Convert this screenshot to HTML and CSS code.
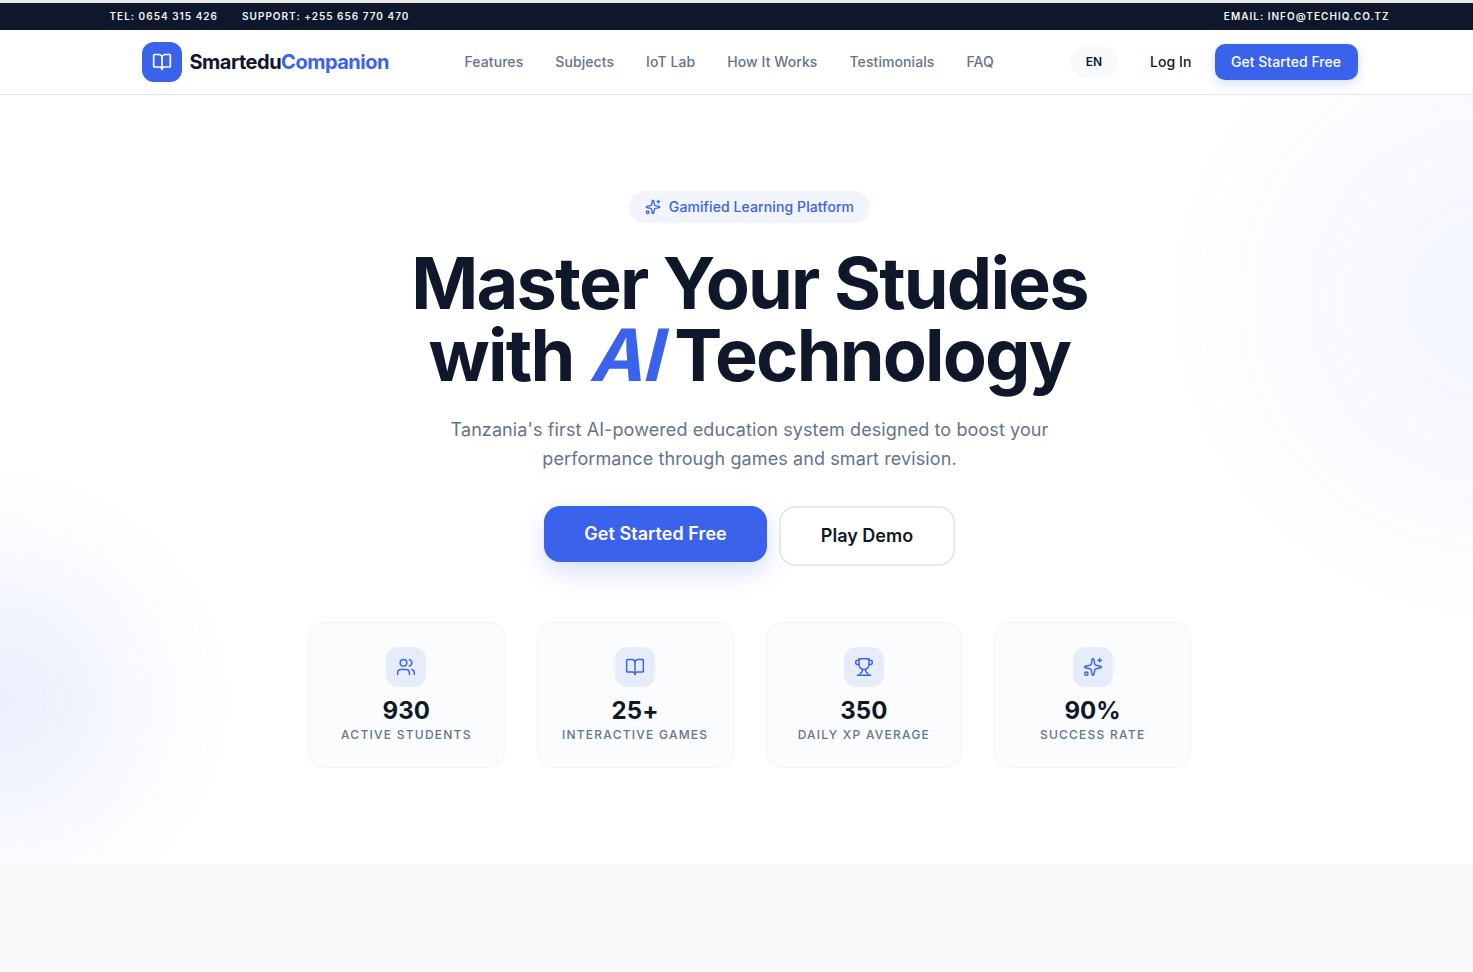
FILE: index.html
```html
<!DOCTYPE html>
<html lang="en">
<head>
    <meta charset="UTF-8">
    <meta name="viewport" content="width=device-width, initial-scale=1.0">
    <title>SmarteduCompanion</title>
    <link rel="stylesheet" href="styles.css">
</head>
<body>
    <!-- Icons -->
    <svg class="icon-defs" xmlns="http://www.w3.org/2000/svg">
        <symbol id="i-book" viewBox="0 0 24 24">
            <path d="M12 7v14"/>
            <path d="M3 18a1 1 0 0 1-1-1V4a1 1 0 0 1 1-1h5a4 4 0 0 1 4 4 4 4 0 0 1 4-4h5a1 1 0 0 1 1 1v13a1 1 0 0 1-1 1h-6a3 3 0 0 0-3 3 3 3 0 0 0-3-3z"/>
        </symbol>
        <symbol id="i-users" viewBox="0 0 24 24">
            <path d="M16 21v-2a4 4 0 0 0-4-4H6a4 4 0 0 0-4 4v2"/>
            <circle cx="9" cy="7" r="4"/>
            <path d="M22 21v-2a4 4 0 0 0-3-3.87"/>
            <path d="M16 3.13a4 4 0 0 1 0 7.75"/>
        </symbol>
        <symbol id="i-trophy" viewBox="0 0 24 24">
            <path d="M6 9H4.5a2.5 2.5 0 0 1 0-5H6"/>
            <path d="M18 9h1.5a2.5 2.5 0 0 0 0-5H18"/>
            <path d="M4 22h16"/>
            <path d="M10 14.66V17c0 .55-.47.98-.97 1.21C7.85 18.75 7 20.24 7 22"/>
            <path d="M14 14.66V17c0 .55.47.98.97 1.21C16.15 18.75 17 20.24 17 22"/>
            <path d="M18 2H6v7a6 6 0 0 0 12 0V2Z"/>
        </symbol>
        <symbol id="i-sparkles" viewBox="0 0 24 24">
            <path d="M11.017 2.814a1 1 0 0 1 1.966 0l1.051 5.558a2 2 0 0 0 1.594 1.594l5.558 1.051a1 1 0 0 1 0 1.966l-5.558 1.051a2 2 0 0 0-1.594 1.594l-1.051 5.558a1 1 0 0 1-1.966 0l-1.051-5.558a2 2 0 0 0-1.594-1.594l-5.558-1.051a1 1 0 0 1 0-1.966l5.558-1.051a2 2 0 0 0 1.594-1.594z"/>
            <path d="M20 2v4"/>
            <path d="M22 4h-4"/>
            <circle cx="4" cy="20" r="2"/>
        </symbol>
    </svg>

    <!-- Top bar -->
    <div class="topbar">
        <div class="topbar-inner">
            <div class="topbar-left">
                <span>Tel: 0654 315 426</span>
                <span>Support: +255 656 770 470</span>
            </div>
            <span>Email: info@techiq.co.tz</span>
        </div>
    </div>

    <!-- Nav -->
    <header class="navbar">
        <div class="navbar-inner">
            <a class="logo" href="#">
                <span class="logo-mark"><svg class="icon"><use href="#i-book"/></svg></span>
                <span class="logo-text">Smartedu<span class="accent">Companion</span></span>
            </a>
            <nav class="nav-links">
                <a href="#">Features</a>
                <a href="#">Subjects</a>
                <a href="#">IoT Lab</a>
                <a href="#">How It Works</a>
                <a href="#">Testimonials</a>
                <a href="#">FAQ</a>
            </nav>
            <div class="nav-actions">
                <button class="lang-btn">EN</button>
                <a class="login" href="#">Log In</a>
                <a class="nav-cta" href="#">Get Started Free</a>
            </div>
        </div>
    </header>

    <!-- Hero -->
    <section class="hero">
        <div class="blob blob-right"></div>
        <div class="blob blob-left"></div>
        <div class="hero-content">
            <div class="badge">
                <svg class="icon"><use href="#i-sparkles"/></svg>
                <span class="badge-text">Gamified Learning Platform</span>
            </div>
            <h1>Master Your Studies<br>with <em>AI</em> Technology</h1>
            <p class="lead">Tanzania's first AI-powered education system designed to boost your performance through games and smart revision.</p>
            <div class="hero-buttons">
                <a class="btn-primary" href="#">Get Started Free</a>
                <a class="btn-secondary" href="#">Play Demo</a>
            </div>
            <div class="stats">
                <div class="stat">
                    <span class="stat-icon"><svg class="icon"><use href="#i-users"/></svg></span>
                    <strong>930</strong>
                    <span class="stat-label">Active Students</span>
                </div>
                <div class="stat">
                    <span class="stat-icon"><svg class="icon"><use href="#i-book"/></svg></span>
                    <strong>25+</strong>
                    <span class="stat-label">Interactive Games</span>
                </div>
                <div class="stat">
                    <span class="stat-icon"><svg class="icon"><use href="#i-trophy"/></svg></span>
                    <strong>350</strong>
                    <span class="stat-label">Daily XP Average</span>
                </div>
                <div class="stat">
                    <span class="stat-icon"><svg class="icon"><use href="#i-sparkles"/></svg></span>
                    <strong>90%</strong>
                    <span class="stat-label">Success Rate</span>
                </div>
            </div>
        </div>
    </section>

    <section class="next-section"></section>
</body>
</html>
```

FILE: styles.css
```css
:root {
    --primary: #3b62ea;
    --dark: #0f172a;
    --muted: #64748b;
    --line: #e2e8f0;
}

* {
    margin: 0;
    padding: 0;
    box-sizing: border-box;
}

html {
    height: 100%;
    overflow: hidden;
    background: #fff;
}

/* the page runs a little wider than the window */
body {
    width: 1499px;
    height: 972px;
    overflow: hidden;
    padding-top: 3px;
    font-family: 'Inter', sans-serif;
    color: var(--dark);
    background: #e8e8ea;
}

a {
    color: inherit;
    text-decoration: none;
}

.icon-defs {
    display: none;
}

.icon {
    fill: none;
    stroke: currentColor;
    stroke-width: 2;
    stroke-linecap: round;
    stroke-linejoin: round;
}

/* Top bar */
.topbar {
    height: 27px;
    background: var(--dark);
    color: #f1f5f9;
    font-size: 10px;
    font-weight: 600;
    letter-spacing: 1.02px;
    text-transform: uppercase;
}

.topbar-inner {
    width: 1280px;
    height: 100%;
    margin: 0 auto;
    padding-bottom: 2px;
    display: flex;
    justify-content: space-between;
    align-items: center;
}

.topbar-left {
    display: flex;
    gap: 24px;
}

/* Nav */
.navbar {
    height: 65px;
    background: #fff;
    border-bottom: 1px solid var(--line);
}

.navbar-inner {
    width: 1216px;
    height: 64px;
    margin: 0 auto;
    display: flex;
    align-items: center;
}

.logo {
    display: flex;
    align-items: center;
    gap: 8px;
    width: 323px;
}

.logo-mark {
    width: 40px;
    height: 40px;
    border-radius: 12px;
    background: var(--primary);
    color: #fff;
    display: flex;
    align-items: center;
    justify-content: center;
}

.logo-mark .icon {
    width: 20px;
    height: 20px;
}

.logo-text {
    font-size: 20px;
    font-weight: 700;
    letter-spacing: -0.5px;
}

.accent {
    color: var(--primary);
}

.nav-links {
    display: flex;
    gap: 32px;
    margin-bottom: 2px;
    font-size: 14px;
    font-weight: 500;
    letter-spacing: 0.08px;
    color: var(--muted);
}

.nav-actions {
    margin-left: auto;
    display: flex;
    align-items: center;
}

.lang-btn {
    width: 48px;
    height: 32px;
    padding-bottom: 2px;
    border: none;
    border-radius: 16px;
    background: #f8fafc;
    color: var(--dark);
    font-family: inherit;
    font-size: 12px;
    font-weight: 600;
}

.login {
    margin: 0 0 2px 32px;
    font-size: 14px;
    font-weight: 500;
    letter-spacing: 0.1px;
}

.nav-cta {
    margin-left: 23px;
    width: 143px;
    height: 36px;
    padding-bottom: 2px;
    display: flex;
    align-items: center;
    justify-content: center;
    border-radius: 10px;
    background: var(--primary);
    color: #fff;
    font-size: 14px;
    font-weight: 500;
    letter-spacing: 0.05px;
    box-shadow: 0 4px 12px rgba(59, 98, 234, 0.2);
}

/* Hero */
.hero {
    position: relative;
    height: 769px;
    padding-top: 96px;
    overflow: hidden;
    background: #fff;
}

.blob {
    position: absolute;
    border-radius: 50%;
}

.blob-right {
    top: -95px;
    right: -291px;
    width: 600px;
    height: 600px;
    filter: blur(30px);
    background: radial-gradient(circle, rgba(59, 98, 234, 0.065), rgba(59, 98, 234, 0.02) 55%, transparent 72%);
}

.blob-left {
    top: 395px;
    left: -210px;
    width: 420px;
    height: 420px;
    filter: blur(25px);
    background: radial-gradient(circle, rgba(59, 98, 234, 0.115), rgba(59, 98, 234, 0.025) 55%, transparent 72%);
}

.hero-content {
    position: relative;
    display: flex;
    flex-direction: column;
    align-items: center;
}

.badge {
    height: 32px;
    padding: 0 16px;
    display: flex;
    align-items: center;
    gap: 8px;
    border-radius: 16px;
    background: #f1f4fb;
    color: var(--primary);
    font-size: 14px;
    font-weight: 500;
    letter-spacing: 0.1px;
}

.badge-text {
    margin-bottom: 2px;
}

.badge .icon {
    width: 16px;
    height: 16px;
}

h1 {
    margin-top: 24px;
    font-size: 72px;
    font-weight: 700;
    line-height: 72px;
    letter-spacing: -1.8px;
    text-align: center;
}

/* slanted upright glyphs, the italic face leans too little */
h1 em {
    display: inline-block;
    color: var(--primary);
    font-style: normal;
    transform: skewX(-14deg);
    transform-origin: 0 85%;
}

.lead {
    width: 672px;
    margin-top: 24px;
    font-size: 18px;
    line-height: 29px;
    letter-spacing: 0.1px;
    color: var(--muted);
    text-align: center;
}

.hero-buttons {
    margin-top: 33px;
    display: flex;
    align-items: flex-start;
    gap: 12px;
}

.btn-primary {
    width: 223px;
    height: 56px;
    padding-bottom: 2px;
    display: flex;
    align-items: center;
    justify-content: center;
    border-radius: 16px;
    background: var(--primary);
    color: #fff;
    font-size: 18px;
    font-weight: 600;
    letter-spacing: 0.05px;
    box-shadow: 0 10px 24px rgba(59, 98, 234, 0.2);
}

.btn-secondary {
    width: 176px;
    height: 60px;
    padding-bottom: 2px;
    display: flex;
    align-items: center;
    justify-content: center;
    border: 2px solid var(--line);
    border-radius: 16px;
    background: #fff;
    font-size: 18px;
    font-weight: 600;
}

.stats {
    margin-top: 56px;
    display: grid;
    grid-template-columns: repeat(4, 1fr);
    gap: 32px;
    width: 883px;
}

.stat {
    height: 146px;
    padding-top: 24px;
    display: flex;
    flex-direction: column;
    align-items: center;
    border: 1px solid #f1f5f9;
    border-radius: 16px;
    background: rgba(248, 250, 252, 0.6);
}

.stat-icon {
    width: 40px;
    height: 40px;
    display: flex;
    align-items: center;
    justify-content: center;
    border-radius: 12px;
    background: #e7ecfb;
    color: var(--primary);
}

.stat-icon .icon {
    width: 20px;
    height: 20px;
    stroke-width: 1.75;
}

.stat strong {
    margin-top: 8px;
    font-size: 24px;
    line-height: 32px;
    font-weight: 700;
    letter-spacing: 0.1px;
}

.stat-label {
    font-size: 12px;
    line-height: 16px;
    font-weight: 500;
    letter-spacing: 1.25px;
    text-transform: uppercase;
    color: var(--muted);
}

.next-section {
    height: 108px;
    background: #f8fafc;
}
```
